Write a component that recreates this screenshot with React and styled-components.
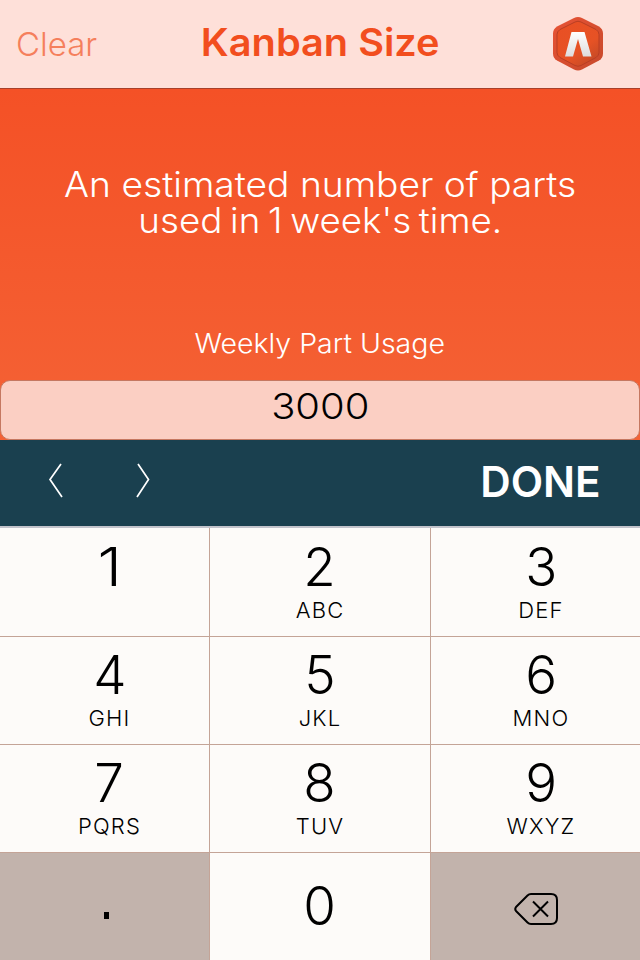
import React from "react";
import styled, { createGlobalStyle } from "styled-components";

const GlobalStyle = createGlobalStyle`
  * { box-sizing: border-box; }
  body { margin: 0; background: #f45f32; }
  button { border: 0; padding: 0; background: none; font: inherit; color: inherit; }
`;

const Screen = styled.main`
  width: 640px;
  height: 960px;
  display: flex;
  flex-direction: column;
  overflow: hidden;
  font-family: "Inter", "Liberation Sans", sans-serif;
  background: linear-gradient(#f45126 88px, #f46235 440px);
`;

const Header = styled.header`
  height: 89px;
  flex: none;
  display: grid;
  grid-template-columns: 150px 1fr 150px;
  align-items: center;
  background: #fee0d9;
  border-bottom: 1px solid #a8402a;
`;

const Text = styled.span`
  display: block;
  white-space: nowrap;
  font-size: ${(p) => p.$size}px;
  line-height: ${(p) => p.$line || p.$size}px;
  font-weight: ${(p) => p.$weight || 300};
  letter-spacing: ${(p) => p.$spacing || 0}px;
  word-spacing: ${(p) => p.$wordSpacing || 0}px;
  transform: scaleX(${(p) => p.$stretch || 1});
`;

const ClearButton = styled.button`
  justify-self: start;
  padding-left: 16px;
  color: #f57f5c;
`;

const Title = styled.h1`
  margin: 0;
  justify-self: center;
  padding-bottom: 4px;
  color: #f24e1e;
`;

const Logo = styled.svg`
  justify-self: end;
  width: 54px;
  height: 56px;
  margin-right: 35px;
`;

const Intro = styled.section`
  height: 291px;
  flex: none;
  display: flex;
  flex-direction: column;
  align-items: center;
  padding-top: 77px;
  color: #fff;
`;

const Label = styled.label`
  margin-top: 88px;
`;

const Field = styled.div`
  height: 60px;
  flex: none;
  display: flex;
  justify-content: center;
  padding-top: 7px;
  background: #fbcfc3;
  border: 1px solid #c57861;
  border-radius: 10px;
  color: #000;
`;

const Toolbar = styled.nav`
  height: 88px;
  flex: none;
  display: flex;
  align-items: center;
  padding: 0 38px 4px 48px;
  background: #1a404f;
  border-bottom: 2px solid #c2c3cb;
  color: #fff;
`;

const Arrow = styled.button`
  width: 16px;
  height: 36px;
  margin-right: 71px;
  transform: translateY(-1px);
`;

const Done = styled.button`
  margin-left: auto;
`;

const Keypad = styled.section`
  flex: 1;
  display: grid;
  grid-template-columns: 210px 221px 209px;
  grid-template-rows: 109px 108px 108px 107px;
`;

const Key = styled.button`
  display: flex;
  flex-direction: column;
  align-items: center;
  padding-top: ${(p) => (p.$bottom ? 26 : p.$top ? 12 : 11)}px;
  padding-left: ${(p) => p.$shift}px;
  background: ${(p) => (p.$muted ? "#c2b3ac" : "#fdfbf9")};
  border-right: ${(p) => (p.$last ? 0 : 1)}px solid #c4a497;
  border-bottom: ${(p) => (p.$bottom ? 0 : 1)}px solid #c4a497;
  color: #000;
`;

const Letters = styled(Text)`
  margin-top: 3px;
`;

const Dot = styled.span`
  width: 5px;
  height: 7px;
  margin: 33px 6px 0 0;
  background: #000;
`;

const DeleteIcon = styled.svg`
  width: 46px;
  height: 36px;
  margin-top: 12px;
  margin-right: 10px;
`;

const keys = [
  ["1", ""], ["2", "ABC"], ["3", "DEF"],
  ["4", "GHI"], ["5", "JKL"], ["6", "MNO"],
  ["7", "PQRS"], ["8", "TUV"], ["9", "WXYZ"],
  ["."], ["0"], ["delete"],
];

function KeyFace({ value, letters }) {
  if (value === ".") return <Dot aria-label="." />;
  if (value === "delete") {
    return (
      <DeleteIcon viewBox="0 0 46 36" fill="none" stroke="#000" strokeWidth="2" strokeLinejoin="round">
        <path d="M18 3H38Q44 3 44 9V27Q44 33 38 33H18Q16 33 14.500 31.500L3 20Q1.500 18 3 16L14.500 4.500Q16 3 18 3Z" />
        <path d="M20 10.500L35 25.500M35 10.500L20 25.500" />
      </DeleteIcon>
    );
  }
  return (
    <>
      <Text $size={54} $stretch={value === "1" ? 1.15 : 0.98}>{value}</Text>
      {letters && <Letters $size={22} $line={26} $spacing={1.2}>{letters}</Letters>}
    </>
  );
}

export default function App() {
  return (
    <>
      <GlobalStyle />
      <Screen>
        <Header>
          <ClearButton><Text $size={33}>Clear</Text></ClearButton>
          <Title><Text $size={38} $weight={600} $stretch={1.045}>Kanban Size</Text></Title>
          <Logo viewBox="0 0 54 56">
            <defs>
              <linearGradient id="rim" x1="0" y1="0" x2="1" y2="1">
                <stop offset="0" stopColor="#e85335" />
                <stop offset="1" stopColor="#c7492b" />
              </linearGradient>
              <linearGradient id="face" x1="0.2" y1="0" x2="0.9" y2="1">
                <stop offset="0" stopColor="#e95024" />
                <stop offset="0.6" stopColor="#e65225" />
                <stop offset="1" stopColor="#bd4827" />
              </linearGradient>
              <linearGradient id="letter" x1="0" y1="0" x2="0" y2="1">
                <stop offset="0" stopColor="#fff" />
                <stop offset="1" stopColor="#dedcdd" />
              </linearGradient>
            </defs>
            <path d="M23 2Q27 0 31 2L48 10.500Q52 13 52 17.500V37.500Q52 42 48 44.500L31 53.500Q27 55.500 23 53.500L6 44.500Q2 42 2 37.500V17.500Q2 13 6 10.500Z" fill="url(#rim)" />
            <path d="M24 6Q27 4.500 30 6L45 13.500Q48 15.500 48 18.500V36.500Q48 39.500 45 41.500L30 49.500Q27 51 24 49.500L9 41.500Q6 39.500 6 36.500V18.500Q6 15.500 9 13.500Z" fill="url(#face)" stroke="#b93e23" strokeWidth="1" />
            <path d="M20.500 16H33.500L40.500 40.500H32L27 23L22 40.500H14Z" fill="url(#letter)" />
          </Logo>
        </Header>
        <Intro>
          <Text $size={35} $line={36} $stretch={1.062}>An estimated number of parts</Text>
          <Text $size={35} $line={36} $stretch={1.05} $wordSpacing={-2.5}>used in 1 week's time.</Text>
          <Label><Text $size={27} $line={36} $stretch={1.055}>Weekly Part Usage</Text></Label>
        </Intro>
        <Field><Text $size={36} $stretch={1.11}>3000</Text></Field>
        <Toolbar>
          <Arrow aria-label="Previous">
            <svg width="16" height="36" viewBox="0 0 16 36" fill="none" stroke="#fff" strokeWidth="1.700">
              <path d="M13 2L2 17.500L14 35" />
            </svg>
          </Arrow>
          <Arrow aria-label="Next">
            <svg width="16" height="36" viewBox="0 0 16 36" fill="none" stroke="#fff" strokeWidth="1.700">
              <path d="M3 2L13.500 17.500L2 35" />
            </svg>
          </Arrow>
          <Done><Text $size={43} $weight={600} $stretch={0.98}>DONE</Text></Done>
        </Toolbar>
        <Keypad>
          {keys.map(([value, letters], i) => (
            <Key
              key={value}
              $shift={[10, 0, 11][i % 3]}
              $last={i % 3 === 2}
              $top={i < 3}
              $bottom={i > 8}
              $muted={i === 9 || i === 11}
            >
              <KeyFace value={value} letters={letters} />
            </Key>
          ))}
        </Keypad>
      </Screen>
    </>
  );
}
